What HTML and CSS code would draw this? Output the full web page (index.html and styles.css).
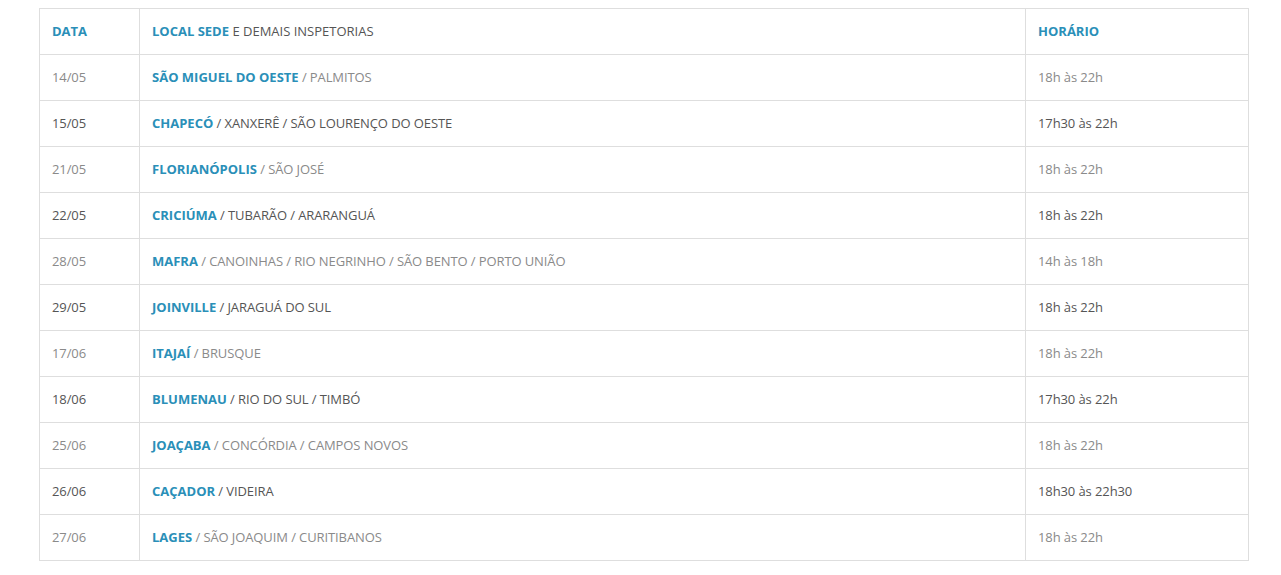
FILE: index.html
```html
<!DOCTYPE html>
<html lang="pt-BR">
<head>
<meta charset="utf-8">
<title>Agenda</title>
<link rel="stylesheet" href="styles.css">
</head>
<body>
<div class="wrap">
<table class="agenda">
<colgroup><col class="c-data"><col class="c-local"><col class="c-hora"></colgroup>
<thead>
<tr><th class="hl">DATA</th><th><span class="hl">LOCAL SEDE</span> E DEMAIS INSPETORIAS</th><th class="hl">HORÁRIO</th></tr>
</thead>
<tbody>
<tr class="odd"><td>14/05</td><td><span class="hl">SÃO MIGUEL DO OESTE</span> / PALMITOS</td><td>18h às 22h</td></tr>
<tr class="even"><td>15/05</td><td><span class="hl">CHAPECÓ</span> / XANXERÊ / SÃO LOURENÇO DO OESTE</td><td>17h30 às 22h</td></tr>
<tr class="odd"><td>21/05</td><td><span class="hl">FLORIANÓPOLIS</span> / SÃO JOSÉ</td><td>18h às 22h</td></tr>
<tr class="even"><td>22/05</td><td><span class="hl">CRICIÚMA</span> / TUBARÃO / ARARANGUÁ</td><td>18h às 22h</td></tr>
<tr class="odd"><td>28/05</td><td><span class="hl">MAFRA</span> / CANOINHAS / RIO NEGRINHO / SÃO BENTO / PORTO UNIÃO</td><td>14h às 18h</td></tr>
<tr class="even"><td>29/05</td><td><span class="hl">JOINVILLE</span> / JARAGUÁ DO SUL</td><td>18h às 22h</td></tr>
<tr class="odd"><td>17/06</td><td><span class="hl">ITAJAÍ</span> / BRUSQUE</td><td>18h às 22h</td></tr>
<tr class="even"><td>18/06</td><td><span class="hl">BLUMENAU</span> / RIO DO SUL / TIMBÓ</td><td>17h30 às 22h</td></tr>
<tr class="odd"><td>25/06</td><td><span class="hl">JOAÇABA</span> / CONCÓRDIA / CAMPOS NOVOS</td><td>18h às 22h</td></tr>
<tr class="even"><td>26/06</td><td><span class="hl">CAÇADOR</span> / VIDEIRA</td><td>18h30 às 22h30</td></tr>
<tr class="odd"><td>27/06</td><td><span class="hl">LAGES</span> / SÃO JOAQUIM / CURITIBANOS</td><td>18h às 22h</td></tr>
</tbody>
</table>
</div>
</body>
</html>
```
FILE: styles.css
```css
html, body { margin: 0; padding: 0; background: #fff; }
body { font-family: "Open Sans", "Liberation Sans", sans-serif; font-size: 13px; }
.wrap { padding: 8px 32px 0 39px; }
.agenda { width: 100%; border-collapse: collapse; table-layout: fixed; }
.c-data { width: 100px; }
.c-hora { width: 223px; }
.agenda th, .agenda td {
  border: 1px solid #dedede;
  height: 43px;
  padding: 0 12px 2px;
  text-align: left;
  vertical-align: middle;
  font-weight: normal;
  white-space: nowrap;
}
.agenda th { color: #555; }
.agenda td { letter-spacing: -0.1px; }
.agenda .hl { color: #2a8fb8; font-weight: 700; letter-spacing: 0; }
.odd td { color: #8a8a8a; }
.even td { color: #555; }
```
